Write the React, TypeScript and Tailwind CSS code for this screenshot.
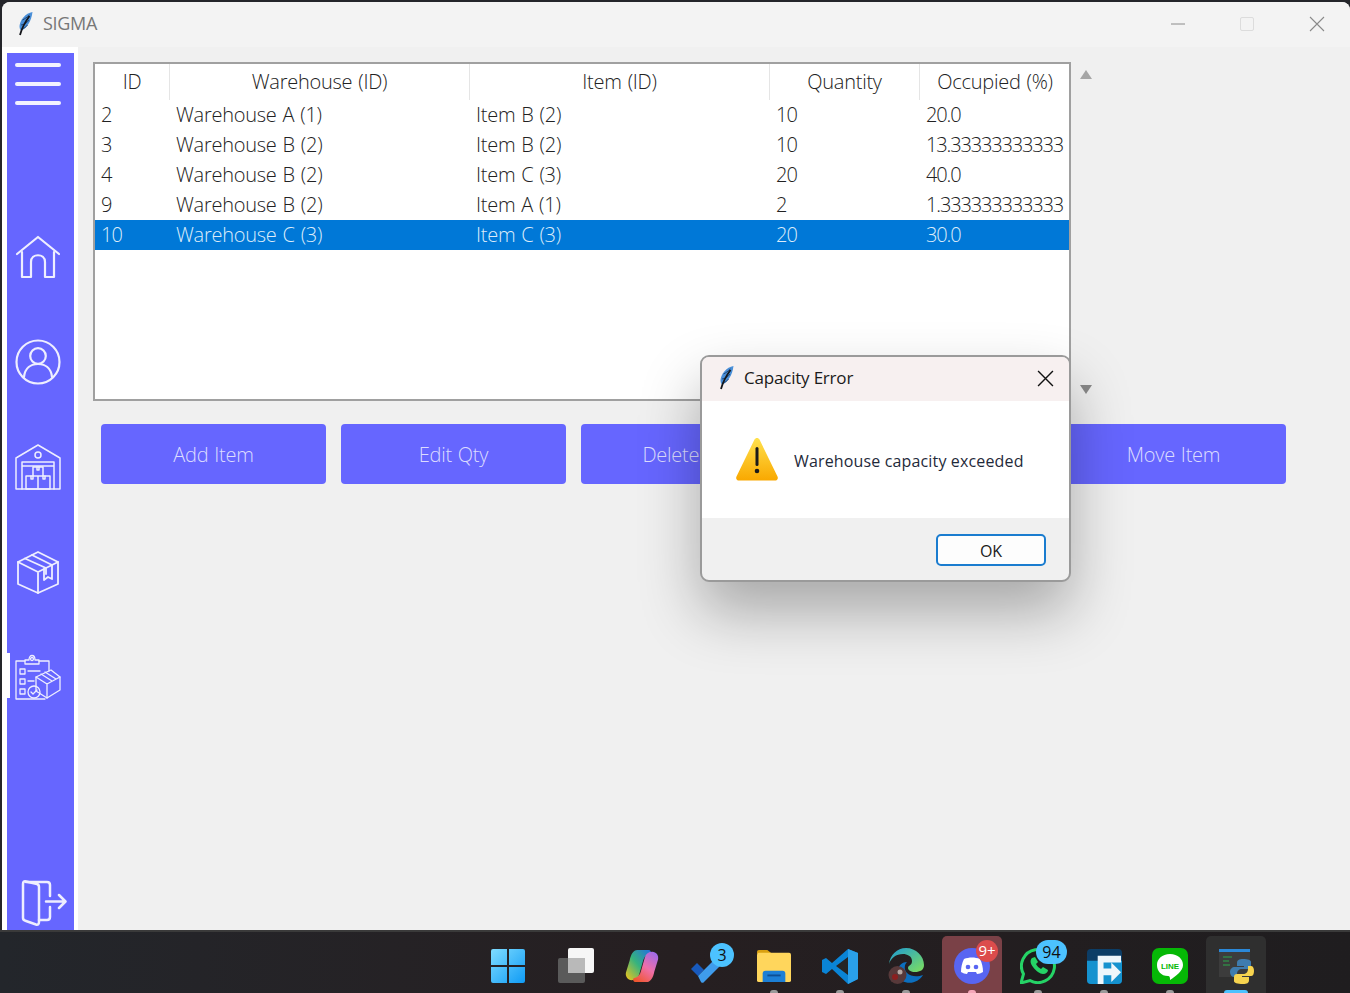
import React from "react";

const rows = [
  { id: "2", wh: "Warehouse A (1)", item: "Item B (2)", qty: "10", occ: "20.0" },
  { id: "3", wh: "Warehouse B (2)", item: "Item B (2)", qty: "10", occ: "13.33333333333" },
  { id: "4", wh: "Warehouse B (2)", item: "Item C (3)", qty: "20", occ: "40.0" },
  { id: "9", wh: "Warehouse B (2)", item: "Item A (1)", qty: "2", occ: "1.333333333333" },
  { id: "10", wh: "Warehouse C (3)", item: "Item C (3)", qty: "20", occ: "30.0", selected: true },
];

const Feather = ({ className = "" }: { className?: string }) => (
  <svg viewBox="0 0 16 24" className={className}>
    <path d="M15 0C8 1 2.500 8 2 14c0 2 .5 3.500 1.500 4.500C9 17 14 9 15 0z" fill="#4a8fd8" />
    <path d="M5 8c2-1 5-3 7-5M3.500 13c3-.5 6-2 8-5M4 17c2-.5 5-2 6-4" stroke="#1c3f6e" strokeWidth=".9" fill="none" />
    <path d="M12 4C9 8 5 14 2.500 23" stroke="#14161b" strokeWidth="1.800" fill="none" />
  </svg>
);

const line = { fill: "none", stroke: "currentColor", strokeLinecap: "round", strokeLinejoin: "round" } as const;

const HomeIcon = () => (
  <svg viewBox="0 0 46 44" className="w-[46px] h-[44px]" {...line} strokeWidth="2.200">
    <path d="M2 19 23 2l21 17" />
    <path d="M7 17v25h9V27c0-9 14-9 14 0v15h9V17" />
  </svg>
);

const UserIcon = () => (
  <svg viewBox="0 0 46 46" className="w-[46px] h-[46px]" {...line} strokeWidth="2.200">
    <circle cx="23" cy="23" r="21.500" />
    <circle cx="23" cy="17" r="7.800" />
    <path d="M9 38c1-9 7-13 14-13s13 4 14 13" />
  </svg>
);

const WarehouseIcon = () => (
  <svg viewBox="0 0 46 46" className="w-[46px] h-[46px]" {...line} strokeWidth="1.500">
    <path d="M1 45V14L23 1l22 13v31z" />
    <circle cx="23" cy="11" r="3" />
    <path d="M7 45V18h32v27M7 22h32" />
    <path d="M18 23h10v9H18zM11 32h12v13H11zM23 32h12v13H23z" />
    <path d="M22 23v3h2v-3M16 32v3h2v-3M28 32v3h2v-3" />
  </svg>
);

const BoxIcon = () => (
  <svg viewBox="0 0 44 44" className="w-[44px] h-[44px]" {...line} strokeWidth="1.800">
    <path d="M22 2 2 12v22l20 9 20-9V12z" />
    <path d="M2 12l20 10 20-10M22 22v21" />
    <path d="M9 8.500 30 18v6M16 5l20 10" />
    <path d="M28 19v11l4-3 4 2V16" />
  </svg>
);

const ReportIcon = () => (
  <svg viewBox="0 0 46 46" className="w-[46px] h-[46px]" {...line} strokeWidth="1.300">
    <path d="M10 7H1v38h29M24 7h10v10" />
    <path d="M10 10V6h4c0-6 6-6 6 0h4v4z" />
    <circle cx="17" cy="5" r="1.500" />
    <rect x="5" y="15" width="5" height="5" />
    <rect x="5" y="25" width="5" height="5" />
    <rect x="5" y="35" width="5" height="5" />
    <path d="M13 17h12M13 27h6" />
    <path d="M21 23 36 16l9 7v13l-13 8-11-7z" />
    <path d="M21 23l11 7 13-7M32 30v14M26 20l11 7M30 18l11 7" />
    <circle cx="19" cy="38" r="6" />
    <path d="m16 38 2 2 4-4" />
  </svg>
);

const ExitIcon = () => (
  <svg viewBox="0 0 46 46" className="w-[46px] h-[46px]" {...line} strokeWidth="2.500">
    <path d="M2 4c0-2 1-3 3-2.500L16 4c1.500.5 2 1 2 3v35c0 2-1 3-3 2.500L5 41c-2-.5-3-1-3-3z" />
    <path d="M5 2h21c2 0 3 1 3 3v11M18 40h8c2 0 3-1 3-3V27" />
    <path d="M25 21.500h19M38 15l6.500 6.500L38 28" />
  </svg>
);

const TaskbarIcons = () => (
  <>
    <TaskSlot>
      <svg viewBox="0 0 36 36" className="w-[36px] h-[36px] -translate-x-[2px]">
        <defs>
          <linearGradient id="win" x1="0" y1="0" x2="1" y2="1">
            <stop offset="0" stopColor="#7fdcff" />
            <stop offset="1" stopColor="#0f9bf5" />
          </linearGradient>
        </defs>
        <path d="M1 3a2 2 0 0 1 2-2h14v16H1zM19 1h14a2 2 0 0 1 2 2v14H19zM1 19h16v16H3a2 2 0 0 1-2-2zM19 19h16v14a2 2 0 0 1-2 2H19z" fill="url(#win)" />
      </svg>
    </TaskSlot>
    <TaskSlot>
      <svg viewBox="0 0 36 36" className="w-[36px] h-[36px]">
        <rect x="0" y="10" width="27" height="25" rx="2" fill="#5a5a5a" />
        <rect x="10" y="0" width="26" height="25" rx="2" fill="#f6f6f6" />
        <rect x="10" y="10" width="17" height="15" fill="#b9b9b9" />
      </svg>
    </TaskSlot>
    <TaskSlot>
      <svg viewBox="0 0 36 36" className="w-[34px] h-[34px]">
        <defs>
          <linearGradient id="cp1" x1="0" y1="1" x2="1" y2="0">
            <stop offset="0" stopColor="#f5c518" />
            <stop offset=".5" stopColor="#36b37e" />
            <stop offset="1" stopColor="#2270e0" />
          </linearGradient>
          <linearGradient id="cp2" x1="0.800" y1="0" x2="0.200" y2="1">
            <stop offset="0" stopColor="#a06be8" />
            <stop offset=".5" stopColor="#ef6fa8" />
            <stop offset="1" stopColor="#f0562f" />
          </linearGradient>
        </defs>
        <path d="M13 1H25C27 1 28 3 27 5C22 6 20 9 19 13L15 27C14 31 11 33 7 33C3 33 0 29 1 25L5 12C6 6 9 1 13 1z" fill="url(#cp1)" />
        <path d="M23 35H11C9 35 8 33 9 31C14 30 16 27 17 23L21 9C22 5 25 3 29 3C33 3 36 7 35 11L31 24C30 30 27 35 23 35z" fill="url(#cp2)" />
      </svg>
    </TaskSlot>
    <TaskSlot
      badge={<span className="absolute left-[20px] top-[-5px] w-[24px] h-[24px] rounded-full bg-[#4cc2ff] text-[#111] text-[16px] leading-[24px] text-center">3</span>}
    >
      <svg viewBox="0 0 36 36" className="w-[36px] h-[36px]">
        <path d="M1 21 7 15l7 7-6 6z" fill="#185abd" />
        <path d="M8 28 29 7l6 6-21 21a2 2 0 0 1-3 0z" fill="#3f9cec" />
      </svg>
    </TaskSlot>
    <TaskSlot dot="#9a9a9a">
      <svg viewBox="0 0 36 36" className="w-[36px] h-[34px]">
        <path d="M0 3a2 2 0 0 1 2-2h9l5 4H0z" fill="#d9a011" />
        <rect x="0" y="4" width="36" height="31" rx="2" fill="#ffd65c" />
        <path d="M6 35V26a3 3 0 0 1 3-3h18a3 3 0 0 1 3 3v9z" fill="#1c7fd6" />
        <rect x="11" y="27" width="14" height="2" fill="#0d4f94" />
      </svg>
    </TaskSlot>
    <TaskSlot dot="#9a9a9a">
      <svg viewBox="0 0 36 36" className="w-[36px] h-[36px]">
        <path d="M26 1 36 5v26l-10 5L10 21l-6 5-4-2V12l4-2 6 5z" fill="#0a84d6" />
        <path d="M26 9v18L14 18z" fill="#252525" />
        <path d="M26 1 36 5v26l-10 5z" fill="#2aa0ea" />
      </svg>
    </TaskSlot>
    <TaskSlot dot="#9a9a9a">
      <svg viewBox="0 0 36 36" className="w-[36px] h-[36px]">
        <defs>
          <linearGradient id="edge" x1="0" y1="0" x2="1" y2="1">
            <stop offset="0" stopColor="#1c9ad6" />
            <stop offset="1" stopColor="#7fe05c" />
          </linearGradient>
        </defs>
        <path d="M1 16C2 7 9 0 18 0c10 0 18 8 18 17 0 5-4 7-9 7-4 0-7-2-7-4 0-3 4-2 4-7S19 6 15 6C8 6 3 10 1 16z" fill="url(#edge)" />
        <path d="M14 33c8 4 17 1 21-6-5 2-12 2-16-2-3-3-3-8 0-11C10 14 6 26 14 33z" fill="#0c6fbf" />
        <circle cx="9.500" cy="27" r="9" fill="#57393a" />
        <circle cx="7" cy="29" r="3" fill="#8b1f1f" />
        <circle cx="12" cy="24" r="2.500" fill="#b7a7a2" />
      </svg>
    </TaskSlot>
    <TaskSlot
      dot="#f4a6b8"
      active="bg-[#7a4147]"
      badge={<span className="absolute left-[22px] top-[-8px] w-[22px] h-[22px] rounded-full bg-[#dc4c4c] text-white text-[15px] font-medium leading-[21px] text-center">9+</span>}
    >
      <svg viewBox="0 0 36 36" className="w-[36px] h-[36px]">
        <circle cx="18" cy="18" r="18" fill="#5865f2" />
        <path d="M10 11c5-2 11-2 16 0 2 4 3 8 3 13-2 1-4 2-6 2l-1-2H14l-1 2c-2 0-4-1-6-2 0-5 1-9 3-13z" fill="#fff" />
        <circle cx="14" cy="19" r="2.300" fill="#5865f2" />
        <circle cx="22" cy="19" r="2.300" fill="#5865f2" />
      </svg>
    </TaskSlot>
    <TaskSlot
      dot="#9a9a9a"
      badge={<span className="absolute left-[16px] top-[-8px] w-[31px] h-[24px] rounded-full bg-[#4cc2ff] text-[#111] text-[16px] leading-[24px] text-center">94</span>}
    >
      <svg viewBox="0 0 36 36" className="w-[36px] h-[36px]">
        <path d="M1 35 3.500 26A16.500 16.500 0 1 1 10 32.500z" fill="#1c1c1c" stroke="#25d366" strokeWidth="3" />
        <path d="M12 10c-2 2-2 5 1 9s7 7 10 7 5-2 5-4l-5-3-2 2c-2-1-4-3-5-5l2-2-3-5z" fill="#25d366" />
      </svg>
    </TaskSlot>
    <TaskSlot dot="#9a9a9a">
      <svg viewBox="0 0 36 36" className="w-[35px] h-[35px]">
        <rect width="36" height="36" rx="4" fill="#0c3d66" />
        <path d="M0 32V12h36v20a4 4 0 0 1-4 4H4a4 4 0 0 1-4-4z" fill="#1592cf" />
        <path d="M11 36V7h24v7H17v6h8v-6l10 10-10 10v-7h-8v9z" fill="#eef6fb" />
      </svg>
    </TaskSlot>
    <TaskSlot dot="#9a9a9a">
      <svg viewBox="0 0 36 36" className="w-[36px] h-[36px]">
        <rect width="36" height="36" rx="7" fill="#06b806" />
        <path d="M18 6c8 0 13 5 13 11 0 6-7 11-13 15 0-2 0-4-2-4C9 28 5 23 5 17 5 11 10 6 18 6z" fill="#fff" />
        <text x="18" y="20.500" textAnchor="middle" fontSize="8" fontWeight="700" fill="#06b806" fontFamily="'Liberation Sans', sans-serif">LINE</text>
      </svg>
    </TaskSlot>
    <TaskSlot dot="#4cc2ff" wide active="bg-[#2f2f2f]">
      <svg viewBox="0 0 36 36" className="w-[36px] h-[36px]">
        <rect x="1" y="2" width="31" height="27" fill="#3c3c3c" />
        <rect x="1" y="1" width="31" height="3" fill="#2b88d8" />
        <path d="M5 9h9M5 13h6M5 17h7" stroke="#2aa84a" strokeWidth="1" />
        <path d="M25 11c-4 0-6 1-6 4v3h7v1h-9c-3 0-5 2-5 5s2 5 4 5h3v-3c0-3 2-5 5-5h6c2 0 3-1 3-3v-4c0-2-3-3-8-3z" fill="#3f7cae" />
        <path d="M25 36c4 0 6-1 6-4v-3h-7v-1h9c2 0 3-2 3-5s-1-5-3-5h-3v3c0 3-2 5-5 5h-6c-2 0-3 1-3 3v4c0 2 3 3 9 3z" fill="#f7d44f" />
      </svg>
    </TaskSlot>
  </>
);

function TaskSlot({ children, badge, dot, active = "", wide = false }: { children: React.ReactNode; badge?: React.ReactNode; dot?: string; active?: string; wide?: boolean }) {
  return (
    <div className={`relative w-[60px] h-[57px] mx-[3px] rounded-t-[5px] flex items-center justify-center ${active}`}>
      <div className="relative mt-[3px] w-[36px] h-[36px] flex items-center justify-center">
        {children}
        {badge}
      </div>
      {dot && (
        <span
          className={`absolute bottom-0 left-1/2 -translate-x-1/2 h-[3px] rounded-t-full ${wide ? "w-[24px]" : "w-[8px]"}`}
          style={{ backgroundColor: dot }}
        />
      )}
    </div>
  );
}

const Cell = ({ w, children, num = "" }: { w: string; children: React.ReactNode; num?: string }) => (
  <div className={`${w} ${num} pl-[6px] shrink-0 whitespace-nowrap overflow-hidden`}>{children}</div>
);

const Head = ({ w, children }: { w: string; children: React.ReactNode }) => (
  <div className={`${w} shrink-0 h-[36px] text-center leading-[35px] border-r border-[#e5e5e5] last:border-r-0`}>{children}</div>
);

export default function App() {
  return (
    <div className="relative w-[1350px] h-[993px] overflow-hidden bg-[#24252a] flex flex-col font-['Open_Sans',sans-serif]">
      {/* app window */}
      <div className="ml-[2px] mt-[2px] h-[928px] rounded-tl-[8px] rounded-tr-[8px] overflow-hidden flex flex-col bg-[#f0f0f0]">
        <div className="h-[45px] shrink-0 bg-[#f3f3f3] flex items-center pl-[15px] pb-[2px]">
          <Feather className="w-[17px] h-[24px]" />
          <span className="ml-[9px] text-[18px] text-[#777] tracking-[-0.3px]">SIGMA</span>
          <div className="ml-auto flex items-center text-[#8a8a8a]">
            <svg viewBox="0 0 16 16" className="w-[16px] h-[16px] mr-[54px]"><path d="M1 8h14" stroke="currentColor" strokeWidth="1" /></svg>
            <div className="w-[14px] h-[14px] mr-[55px] rounded-[2px] border border-[#dcdcdc]" />
            <svg viewBox="0 0 16 16" className="w-[16px] h-[16px] mr-[25px]"><path d="m1 1 14 14M15 1 1 15" stroke="currentColor" strokeWidth="1.100" /></svg>
          </div>
        </div>

        <div className="flex flex-1 min-h-0">
          {/* sidebar */}
          <div className="w-[76px] shrink-0 bg-white pl-[5px] pr-[4px] pt-[6px] flex">
            <div className="relative flex-1 bg-[#6666ff] text-[#eeeeff] flex flex-col items-center pr-[5px]">
              <div className="mt-[10px] w-[46px] h-[42px] flex flex-col justify-between">
                <span className="block h-[4px] rounded-full bg-[#f2f2ff]" />
                <span className="block h-[4px] rounded-full bg-[#f2f2ff]" />
                <span className="block h-[4px] rounded-full bg-[#f2f2ff]" />
              </div>
              <div className="mt-[130px]"><HomeIcon /></div>
              <div className="mt-[60px]"><UserIcon /></div>
              <div className="mt-[59px]"><WarehouseIcon /></div>
              <div className="mt-[60px]"><BoxIcon /></div>
              <div className="mt-[60px]"><ReportIcon /></div>
              <div className="mt-auto mb-[4px] ml-[12px]"><ExitIcon /></div>
              {/* active marker */}
              <span className="absolute left-0 top-[600px] w-[3px] h-[45px] bg-white" />
            </div>
          </div>

          {/* content */}
          <div className="flex-1 pl-[15px] pt-[15px]">
            <div className="flex">
              <div className="w-[978px] h-[339px] bg-white border-2 border-[#a0a0a0] text-[#222] text-[20px] font-light tracking-[-0.25px] [word-spacing:1px]">
                <div className="flex">
                  <Head w="w-[75px]">ID</Head>
                  <Head w="w-[300px]">Warehouse (ID)</Head>
                  <Head w="w-[300px]">Item (ID)</Head>
                  <Head w="w-[150px]">Quantity</Head>
                  <Head w="w-[150px]">Occupied (%)</Head>
                </div>
                {rows.map((r) => (
                  <div key={r.id} className={`flex h-[30px] leading-[30px] ${r.selected ? "bg-[#0078d7] text-[#dcecfa]" : ""}`}>
                    <Cell w="w-[75px]" num="tracking-[-1px]">{r.id}</Cell>
                    <Cell w="w-[300px]">{r.wh}</Cell>
                    <Cell w="w-[300px]">{r.item}</Cell>
                    <Cell w="w-[150px]" num="tracking-[-1px]">{r.qty}</Cell>
                    <Cell w="w-[150px]" num="tracking-[-1.150px]">{r.occ}</Cell>
                  </div>
                ))}
              </div>
              <div className="w-[28px] h-[339px] flex flex-col items-center justify-between pt-[8px] pb-[7px] pl-[1px]">
                <svg viewBox="0 0 12 9" className="w-[12px] h-[9px]"><path d="M6 0 12 9H0z" fill="#a6a6a6" /></svg>
                <svg viewBox="0 0 12 9" className="w-[12px] h-[9px]"><path d="M6 9 12 0H0z" fill="#8a8a8a" /></svg>
              </div>
            </div>

            <div className="flex gap-[15px] ml-[8px] mt-[23px]">
              {["Add Item", "Edit Qty", "Delete Item", "", "Move Item"].map((b, i) => (
                <button key={i} className="w-[225px] h-[60px] pt-[2px] rounded-[4px] bg-[#6666ff] text-[#dcdcff] text-[20px] font-light tracking-[-0.25px] [word-spacing:1px]">
                  {b}
                </button>
              ))}
            </div>
          </div>
        </div>
      </div>

      {/* taskbar */}
      <div className="h-[63px] border-t-2 border-[#3a3a3a] bg-linear-to-r from-[#23262b] via-[#261f21] to-[#1f1d1f] flex items-end pl-[477px]">
        <TaskbarIcons />
      </div>

      {/* message box */}
      <div className="absolute left-[700px] top-[355px] w-[371px] h-[227px] rounded-[9px] border-2 border-[#9a9a9a] bg-[#f0f0f0] overflow-hidden shadow-[0_30px_60px_rgba(0,0,0,0.3)] flex flex-col">
        <div className="h-[44px] shrink-0 bg-[#f7f0f0] flex items-center pl-[16px] pr-[15px] pb-[2px]">
          <Feather className="w-[17px] h-[24px]" />
          <span className="ml-[9px] text-[17px] text-[#1a1a1a] tracking-[-0.2px]">Capacity Error</span>
          <svg viewBox="0 0 16 16" className="ml-auto w-[17px] h-[17px]"><path d="m1 1 14 14M15 1 1 15" stroke="#111" strokeWidth="1.300" /></svg>
        </div>
        <div className="h-[117px] shrink-0 bg-white flex items-center pl-[33px]">
          <svg viewBox="0 0 44 44" className="w-[44px] h-[44px] -mt-[2px]">
            <defs>
              <linearGradient id="warn" x1="0" y1="0" x2="0" y2="1">
                <stop offset="0" stopColor="#ffe14d" />
                <stop offset="1" stopColor="#f9a800" />
              </linearGradient>
            </defs>
            <path d="M19.500 2.500c1.300-2 3.700-2 5 0l18 37c1 2-.3 4-2.500 4H4c-2.200 0-3.500-2-2.500-4z" fill="url(#warn)" />
            <rect x="20.500" y="10" width="3" height="19" rx="1.500" fill="#1a1a1a" />
            <circle cx="22" cy="34" r="2.300" fill="#1a1a1a" />
          </svg>
          <span className="ml-[15px] mt-[3px] text-[16px] font-medium text-[#1f2a3a] tracking-[0.15px]">Warehouse capacity exceeded</span>
        </div>
        <div className="flex-1 flex justify-end items-start pt-[16px] pr-[23px]">
          <button className="w-[110px] h-[32px] pt-[1px] rounded-[5px] border-2 border-[#1a7ccf] bg-[#fdfdfd] text-[16px] font-medium text-[#1a1a1a]">OK</button>
        </div>
      </div>
    </div>
  );
}
